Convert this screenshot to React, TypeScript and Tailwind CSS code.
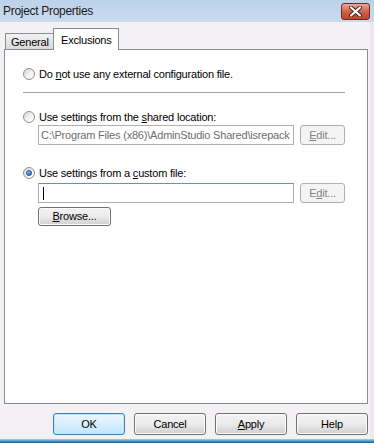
import React from "react";

const font = { fontFamily: '"Liberation Sans", Arial, sans-serif' };

function Radio({ checked }: { checked?: boolean }) {
  return (
    <span className="relative inline-flex h-[12px] w-[12px] shrink-0 items-center justify-center rounded-full border border-[#8e8f8f] bg-gradient-to-br from-[#d4d4d4] via-[#f1f1f1] to-white">
      {checked && (
        <span className="h-[6px] w-[6px] rounded-full border border-[#1c4f94] bg-gradient-to-br from-[#9fd3f9] to-[#1f5eb5]" />
      )}
    </span>
  );
}

function Btn({ children, focused }: { children: React.ReactNode; focused?: boolean }) {
  return (
    <div
      className={`flex h-[22px] w-[72px] items-center justify-center rounded-[3px] border text-[11px] tracking-[-0.2px] text-black ${
        focused
          ? "border-[#3c7fb1] bg-gradient-to-b from-[#eaf6fd] via-[#d9f0fc] to-[#bee6fd] shadow-[inset_0_0_0_1px_#c6e6f8]"
          : "border-[#707070] bg-gradient-to-b from-[#f2f2f2] via-[#ebebeb] to-[#cfcfcf] shadow-[inset_0_0_0_1px_#fcfcfc]"
      }`}
    >
      {children}
    </div>
  );
}

function DisabledBtn({ children }: { children: React.ReactNode }) {
  return (
    <div className="flex h-[20px] w-[45px] items-center justify-center rounded-[3px] border border-[#adb2b5] bg-[#f4f4f4] text-[11px] text-[#838383]">
      {children}
    </div>
  );
}

export default function App() {
  return (
    <div
      className="flex h-[443px] w-[374px] flex-col overflow-hidden bg-[#f3f1f4] text-[11px] tracking-[-0.2px] text-black"
      style={font}
    >
      {/* title bar */}
      <div className="flex h-[22px] items-center justify-between bg-gradient-to-b from-[#bcd2ea] to-[#c9dbee] pl-[3px] pr-[4px]">
        <span className="text-[12px] tracking-[-0.3px] text-[#1a1a1a]">Project Properties</span>
        <div className="mt-[1px] flex h-[17px] w-[29px] items-center justify-center rounded-[3px] border border-[#6d2a20] bg-gradient-to-b from-[#e7a99b] via-[#d2604a] to-[#c1432a]">
          <svg width="13" height="11" viewBox="0 0 13 11">
            <path d="M2 1.5 L11 9.5 M11 1.5 L2 9.5" stroke="#4a1a14" strokeWidth="4" strokeLinecap="round" />
            <path d="M2 1.5 L11 9.5 M11 1.5 L2 9.5" stroke="#ffffff" strokeWidth="2.2" strokeLinecap="round" />
          </svg>
        </div>
      </div>

      <div className="flex flex-1 border-r-[4px] border-r-[#ece9ee]">
        <div className="flex flex-1 flex-col pl-[4px] pr-[3px]">
          {/* tabs */}
          <div className="mt-[6px] flex h-[21px] items-end pl-[1px]">
            <div className="flex h-[16px] w-[49px] items-center border border-b-0 border-[#898c95] bg-gradient-to-b from-[#f2f2f2] to-[#d9d9d9] pl-[5px] pt-[1px]">
              General
            </div>
            <div className="relative z-10 -mb-px -ml-px flex h-[22px] w-[66px] items-start border border-b-0 border-[#898c95] bg-white pl-[7px] pt-[3px]">
              Exclusions
            </div>
          </div>

          {/* panel */}
          <div className="flex h-[355px] flex-col border border-[#898c95] bg-white pl-[18px] pr-[22px]">
            <div className="mt-[17px] flex h-[14px] items-center gap-[4px]">
              <Radio />
              <span>
                Do <u>n</u>ot use any external configuration file.
              </span>
            </div>

            <div className="mt-[11px] h-px bg-[#a0a0a0]" />

            <div className="mt-[17px] flex h-[14px] items-center gap-[4px]">
              <Radio />
              <span>
                Use settings from the <u>s</u>hared location:
              </span>
            </div>
            <div className="mt-[1px] flex items-center gap-[6px] pl-[15px]">
              <div className="flex h-[20px] w-[256px] items-center overflow-hidden whitespace-nowrap border border-[#afafaf] bg-white pl-[2px] text-[#6d6d6d]">
                C:\Program Files (x86)\AdminStudio Shared\isrepack
              </div>
              <DisabledBtn>
                <span>
                  <u>E</u>dit...
                </span>
              </DisabledBtn>
            </div>

            <div className="mt-[21px] flex h-[14px] items-center gap-[4px]">
              <Radio checked />
              <span>
                Use settings from a <u>c</u>ustom file:
              </span>
            </div>
            <div className="mt-[3px] flex items-center gap-[6px] pl-[15px]">
              <div className="flex h-[20px] w-[256px] items-center border border-[#abadb3] border-t-[#5c94c8] bg-white pl-[4px]">
                <span className="h-[13px] w-px bg-black" />
              </div>
              <DisabledBtn>
                <span>
                  E<u>d</u>it...
                </span>
              </DisabledBtn>
            </div>
            <div className="mt-[4px] pl-[15px]">
              <div className="flex h-[19px] w-[73px] items-center justify-center rounded-[3px] border border-[#707070] bg-gradient-to-b from-[#f2f2f2] via-[#ebebeb] to-[#cfcfcf] shadow-[inset_0_0_0_1px_#fcfcfc]">
                <span>
                  <u>B</u>rowse...
                </span>
              </div>
            </div>
          </div>

          {/* buttons */}
          <div className="mt-[9px] flex justify-end gap-[9px]">
            <Btn focused>OK</Btn>
            <Btn>Cancel</Btn>
            <Btn>
              <span>
                <u>A</u>pply
              </span>
            </Btn>
            <Btn>Help</Btn>
          </div>
        </div>
      </div>
      <div className="h-[4px] bg-gradient-to-b from-[#9fd6f0] via-[#4a9bc9] to-[#1f4f74]" />
    </div>
  );
}
